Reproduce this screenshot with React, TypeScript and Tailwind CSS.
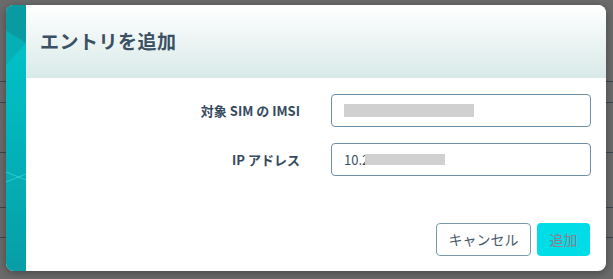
import React from 'react';

const font = { fontFamily: '"Noto Sans CJK JP", "Noto Sans", sans-serif' };

function SideStripe() {
  return (
    <svg width="20" height="266" viewBox="0 0 20 266" className="block shrink-0">
      <defs>
        <linearGradient id="stripe" x1="0" y1="0" x2="0" y2="1">
          <stop offset="0" stopColor="#00c6cc" />
          <stop offset="0.45" stopColor="#02b6bd" />
          <stop offset="1" stopColor="#079ea6" />
        </linearGradient>
      </defs>
      <rect x="0" y="0" width="20" height="266" fill="url(#stripe)" />
      <polygon points="0,0 20,0 20,38 0,26" fill="#0a9aa1" />
      <polygon points="0,26 20,38 0,60" fill="#06afb6" />
      <line x1="0" y1="167" x2="20" y2="175" stroke="#35d2d9" strokeWidth="0.8" />
      <line x1="0" y1="177" x2="20" y2="169" stroke="#35d2d9" strokeWidth="0.8" />
    </svg>
  );
}

export default function App() {
  const lines = [81, 102, 152, 207, 237];
  return (
    <div className="relative w-[613px] h-[279px] bg-[#6b6b6b] overflow-hidden" style={font}>
      {/* table lines behind the overlay */}
      {lines.map((y) => (
        <div key={y} className="absolute left-0 right-0 h-px bg-[#3c4650]" style={{ top: y }} />
      ))}

      <div className="relative pt-[5px] pl-[6px]">
        <div className="flex w-[600px] h-[266px] rounded-lg overflow-hidden bg-white shadow-[0_2px_8px_rgba(0,0,0,0.35)]">
          <SideStripe />
          <div className="flex-1 flex flex-col">
            {/* HEADER */}
            <div className="h-[73px] flex items-center px-[14px] bg-gradient-to-b from-white to-[#d8eae8]">
              <h1 className="text-[19px] font-bold text-[#3b5063] tracking-[0.5px]">エントリを追加</h1>
            </div>

            {/* FORM */}
            <div className="flex flex-col gap-4 pt-4 pr-[15px]">
              <div className="flex items-center">
                <label className="w-[274px] text-right text-[13px] font-bold text-[#34495c]">対象 SIM の IMSI</label>
                <div className="ml-[31px] w-[260px] h-[33px] rounded border border-[#6f8fa6] flex items-center px-3">
                  <div className="w-[130px] h-[13px] bg-[#d0d0d0]" />
                </div>
              </div>
              <div className="flex items-center">
                <label className="w-[274px] text-right text-[13px] font-bold text-[#34495c]">IP アドレス</label>
                <div className="ml-[31px] w-[260px] h-[33px] rounded border border-[#6f8fa6] flex items-center px-3 text-[13px] text-[#3b5063]">
                  <span>10.2</span>
                  <div className="-ml-[4px] w-[80px] h-[11px] bg-[#d0d0d0]" />
                </div>
              </div>
            </div>

            {/* FOOTER */}
            <div className="flex justify-end gap-[6px] pr-4 mt-[47px]">
              <button className="w-[95px] h-[33px] rounded border border-[#7a9aac] bg-white text-[14px] text-[#4a5a6a]">
                キャンセル
              </button>
              <button className="w-[53px] h-[33px] rounded bg-[#00dde6] text-[14px] text-[#8c7f8e]">
                追加
              </button>
            </div>
          </div>
        </div>
      </div>
    </div>
  );
}
